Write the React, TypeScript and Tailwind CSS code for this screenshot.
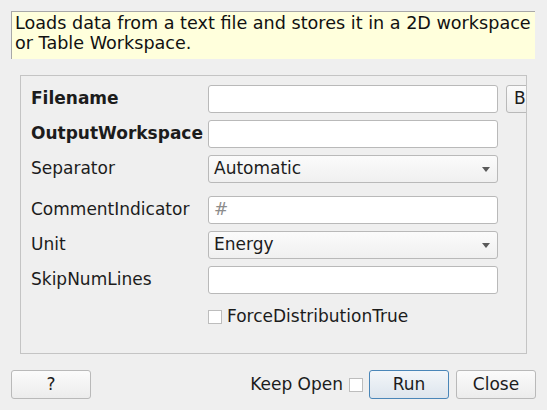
import { ReactNode } from 'react'

const font = { fontFamily: '"DejaVu Sans", Verdana, sans-serif' }

function TextBox({ placeholder }: { placeholder?: string }) {
  return (
    <div className="h-[28px] w-[290px] shrink-0 rounded-[3px] border border-[#b9b9b9] bg-white px-[5px] flex items-center text-[#8c8c8c]">
      {placeholder}
    </div>
  )
}

function Combo({ value }: { value: string }) {
  return (
    <div className="h-[28px] w-[290px] shrink-0 rounded-[3px] border border-[#b9b9b9] bg-gradient-to-b from-[#fbfbfb] to-[#f0f0f0] pl-[5px] pr-[7px] flex items-center justify-between">
      <span>{value}</span>
      <svg width="8" height="5" viewBox="0 0 8 5">
        <path d="M0 0 H8 L4 5 Z" fill="#5a5a5a" />
      </svg>
    </div>
  )
}

function Row({ label, bold, children, className = '' }: { label: string; bold?: boolean; children: ReactNode; className?: string }) {
  return (
    <div className={`flex items-center ${className}`}>
      <div className={`w-[177px] shrink-0 whitespace-nowrap ${bold ? 'font-bold' : ''}`}>{label}</div>
      {children}
    </div>
  )
}

function Check() {
  return <div className="h-[14px] w-[14px] shrink-0 border border-[#bdbdbd] bg-white" />
}

function Button({ children, primary }: { children: ReactNode; primary?: boolean }) {
  return (
    <div
      className={`h-[29px] w-[80px] shrink-0 rounded-[3px] border flex items-center justify-center ${
        primary
          ? 'border-[#4a86b8] bg-gradient-to-b from-[#f3f6f9] to-[#dde5ed]'
          : 'border-[#b9b9b9] bg-gradient-to-b from-[#fbfbfb] to-[#ececec]'
      }`}
    >
      {children}
    </div>
  )
}

export default function App() {
  return (
    <div className="w-[547px] h-[410px] bg-[#efefef] text-[17px] text-[#1c1c1c] overflow-hidden" style={font}>
      <div className="ml-[11px] mt-[11px] w-[524px] h-[48px] bg-[#ffffdc] border-t border-l border-[#a8a8a8] pl-[3px] pt-[1px] leading-[20px] text-[17.6px] text-[#111] whitespace-nowrap">
        Loads data from a text file and stores it in a 2D workspace
        <br />
        or Table Workspace.
      </div>

      <div className="ml-[20px] mt-[16px] w-[507px] h-[279px] border border-[#c4c4c4] overflow-hidden pl-[10px] pt-[9px] flex flex-col">
        <Row label="Filename" bold>
          <TextBox />
          <div className="ml-[8px] h-[28px] w-[40px] shrink-0 rounded-[3px] border border-[#b9b9b9] bg-gradient-to-b from-[#fbfbfb] to-[#ececec] pl-[7px] flex items-center">
            B
          </div>
        </Row>
        <Row label="OutputWorkspace" bold className="mt-[7px]">
          <TextBox />
        </Row>
        <Row label="Separator" className="mt-[7px]">
          <Combo value="Automatic" />
        </Row>
        <Row label="CommentIndicator" className="mt-[13px]">
          <TextBox placeholder="#" />
        </Row>
        <Row label="Unit" className="mt-[7px]">
          <Combo value="Energy" />
        </Row>
        <Row label="SkipNumLines" className="mt-[7px]">
          <TextBox />
        </Row>
        <div className="mt-[10px] ml-[177px] flex items-center gap-[5px]">
          <Check />
          <span>ForceDistributionTrue</span>
        </div>
      </div>

      <div className="mt-[16px] mx-[11px] flex items-center">
        <Button>?</Button>
        <div className="flex-1" />
        <span>Keep Open</span>
        <div className="ml-[6px] mr-[6px]">
          <Check />
        </div>
        <Button primary>Run</Button>
        <div className="w-[7px]" />
        <Button>Close</Button>
      </div>
    </div>
  )
}
